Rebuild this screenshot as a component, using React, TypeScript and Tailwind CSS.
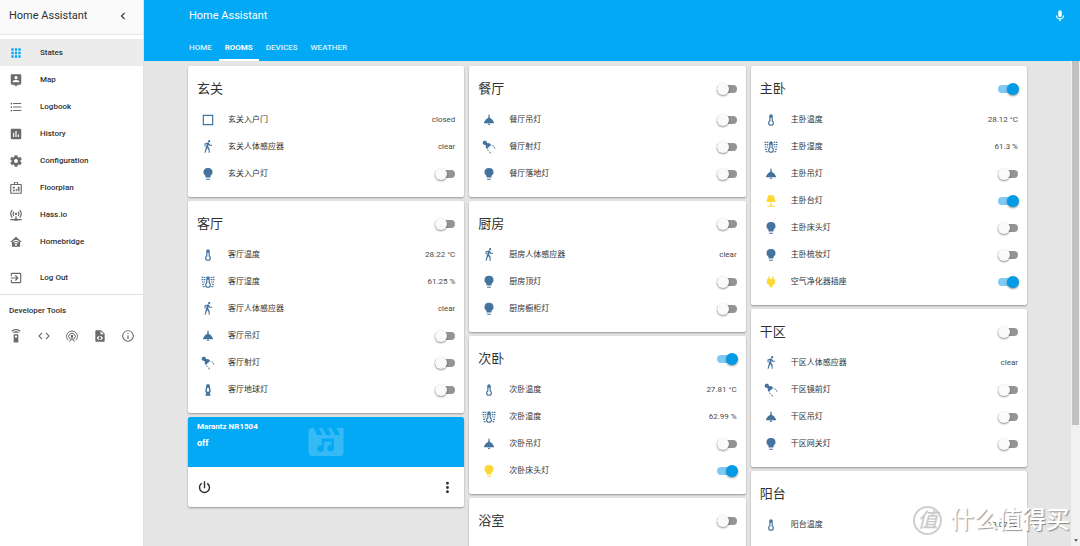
import type { ReactNode } from 'react';

const ICONS: Record<string, string> = {
  apps: 'M16,20H20V16H16M16,14H20V10H16M10,8H14V4H10M16,8H20V4H16M10,14H14V10H10M4,14H8V10H4M4,20H8V16H4M10,20H14V16H10M4,8H8V4H4V8Z',
  account:
    'M18,16H6V15.1C6,13.1 10,12 12,12C14,12 18,13.1 18,15.1M12,5.3C13.5,5.3 14.7,6.5 14.7,8C14.7,9.5 13.5,10.7 12,10.7C10.5,10.7 9.3,9.5 9.3,8C9.3,6.5 10.5,5.3 12,5.3M19,2H5C3.89,2 3,2.89 3,4V18A2,2 0 0,0 5,20H9L12,23L15,20H19A2,2 0 0,0 21,18V4C21,2.89 20.1,2 19,2Z',
  list: 'M7,5H21V7H7V5M7,13V11H21V13H7M4,4.5A1.5,1.5 0 0,1 5.5,6A1.5,1.5 0 0,1 4,7.5A1.5,1.5 0 0,1 2.5,6A1.5,1.5 0 0,1 4,4.5M4,10.5A1.5,1.5 0 0,1 5.5,12A1.5,1.5 0 0,1 4,13.5A1.5,1.5 0 0,1 2.5,12A1.5,1.5 0 0,1 4,10.5M7,19V17H21V19H7M4,16.5A1.5,1.5 0 0,1 5.5,18A1.5,1.5 0 0,1 4,19.5A1.5,1.5 0 0,1 2.5,18A1.5,1.5 0 0,1 4,16.5Z',
  poll: 'M17,17H15V13H17M13,17H11V7H13M9,17H7V10H9M19,3H5C3.89,3 3,3.89 3,5V19A2,2 0 0,0 5,21H19A2,2 0 0,0 21,19V5C21,3.89 20.1,3 19,3Z',
  cog: 'M12,15.5A3.5,3.5 0 0,1 8.5,12A3.5,3.5 0 0,1 12,8.5A3.5,3.5 0 0,1 15.5,12A3.5,3.5 0 0,1 12,15.5M19.43,12.97C19.47,12.65 19.5,12.33 19.5,12C19.5,11.67 19.47,11.34 19.43,11L21.54,9.37C21.73,9.22 21.78,8.95 21.66,8.73L19.66,5.27C19.54,5.05 19.27,4.96 19.05,5.05L16.56,6.05C16.04,5.66 15.5,5.32 14.87,5.07L14.5,2.42C14.46,2.18 14.25,2 14,2H10C9.75,2 9.54,2.18 9.5,2.42L9.13,5.07C8.5,5.32 7.96,5.66 7.44,6.05L4.95,5.05C4.73,4.96 4.46,5.05 4.34,5.27L2.34,8.73C2.21,8.95 2.27,9.22 2.46,9.37L4.57,11C4.53,11.34 4.5,11.67 4.5,12C4.5,12.33 4.53,12.65 4.57,12.97L2.46,14.63C2.27,14.78 2.21,15.05 2.34,15.27L4.34,18.73C4.46,18.95 4.73,19.03 4.95,18.95L7.44,17.94C7.96,18.34 8.5,18.68 9.13,18.93L9.5,21.58C9.54,21.82 9.75,22 10,22H14C14.25,22 14.46,21.82 14.5,21.58L14.87,18.93C15.5,18.67 16.04,18.34 16.56,17.94L19.05,18.95C19.27,19.03 19.54,18.95 19.66,18.73L21.66,15.27C21.78,15.05 21.73,14.78 21.54,14.63L19.43,12.97Z',
  floorplan:
    'M9,1.5H15L16,5H20A2,2 0 0,1 22,7V20A2,2 0 0,1 20,22H4A2,2 0 0,1 2,20V7A2,2 0 0,1 4,5H8L9,1.5M10.4,3.2L10,5H14L13.6,3.2H10.4M4,7V20H20V7H4M6.5,10H10V13H6.5V10M6.5,15H10V17.5H6.5V15M11.5,13.5H13.5V17.5H11.5V13.5M15,10H18V17.5H15V10Z',
  network:
    'M4.93,2.93C3.12,4.74 2,7.24 2,10C2,12.76 3.12,15.26 4.93,17.07L6.34,15.66C4.89,14.22 4,12.22 4,10C4,7.79 4.89,5.78 6.34,4.34L4.93,2.93M19.07,2.93L17.66,4.34C19.11,5.78 20,7.79 20,10C20,12.22 19.11,14.22 17.66,15.66L19.07,17.07C20.88,15.26 22,12.76 22,10C22,7.24 20.88,4.74 19.07,2.93M7.76,5.76C6.67,6.85 6,8.35 6,10C6,11.65 6.67,13.15 7.76,14.24L9.17,12.83C8.45,12.11 8,11.11 8,10C8,8.89 8.45,7.89 9.17,7.17L7.76,5.76M16.24,5.76L14.83,7.17C15.55,7.89 16,8.89 16,10C16,11.11 15.55,12.11 14.83,12.83L16.24,14.24C17.33,13.15 18,11.65 18,10C18,8.35 17.33,6.85 16.24,5.76M12,8A2,2 0 0,0 10,10A2,2 0 0,0 12,12A2,2 0 0,0 14,10A2,2 0 0,0 12,8M11,14V18H10A1,1 0 0,0 9,19H2V21H9A1,1 0 0,0 10,22H14A1,1 0 0,0 15,21H22V19H15A1,1 0 0,0 14,18H13V14H11Z',
  bridge:
    'M12,3L2,12H5V20H19V12H22L12,3M12,8.5C14.34,8.5 16.46,9.43 18,10.94L16.8,12.12C15.58,10.91 13.88,10.17 12,10.17C10.12,10.17 8.42,10.91 7.2,12.12L6,10.94C7.54,9.43 9.66,8.5 12,8.5M12,11.83C13.4,11.83 14.67,12.39 15.6,13.3L14.4,14.47C13.79,13.87 12.94,13.5 12,13.5C11.06,13.5 10.2,13.87 9.6,14.47L8.4,13.3C9.33,12.39 10.6,11.83 12,11.83M12,15.17C12.94,15.17 13.7,15.91 13.7,16.83C13.7,17.75 12.94,18.5 12,18.5C11.06,18.5 10.3,17.75 10.3,16.83C10.3,15.91 11.06,15.17 12,15.17Z',
  exit: 'M19,3H5C3.89,3 3,3.89 3,5V9H5V5H19V19H5V15H3V19A2,2 0 0,0 5,21H19A2,2 0 0,0 21,19V5C21,3.89 20.1,3 19,3M10.08,15.58L11.5,17L16.5,12L11.5,7L10.08,8.41L12.67,11H3V13H12.67L10.08,15.58Z',
  remote:
    'M12,0C8.96,0 6.21,1.23 4.22,3.22L5.63,4.63C7.26,3 9.5,2 12,2C14.5,2 16.74,3 18.36,4.64L19.77,3.23C17.79,1.23 15.04,0 12,0M7.05,6.05L8.46,7.46C9.37,6.56 10.62,6 12,6C13.38,6 14.63,6.56 15.54,7.46L16.95,6.05C15.68,4.78 13.93,4 12,4C10.07,4 8.32,4.78 7.05,6.05M12,15A2,2 0 0,1 10,13A2,2 0 0,1 12,11A2,2 0 0,1 14,13A2,2 0 0,1 12,15M15,9H9A1,1 0 0,0 8,10V22A1,1 0 0,0 9,23H15A1,1 0 0,0 16,22V10A1,1 0 0,0 15,9Z',
  code: 'M14.6,16.6L19.2,12L14.6,7.4L16,6L22,12L16,18L14.6,16.6M9.4,16.6L4.8,12L9.4,7.4L8,6L2,12L8,18L9.4,16.6Z',
  file: 'M13,9H18.5L13,3.5V9M6,2H14L20,8V20A2,2 0 0,1 18,22H6C4.89,22 4,21.1 4,20V4C4,2.89 4.89,2 6,2M6.12,15.5L9.86,19.24L11.28,17.83L8.95,15.5L11.28,13.17L9.86,11.76L6.12,15.5M17.28,15.5L13.54,11.76L12.12,13.17L14.45,15.5L12.12,17.83L13.54,19.24L17.28,15.5Z',
  info: 'M11,9H13V7H11M12,20C7.59,20 4,16.41 4,12C4,7.59 7.59,4 12,4C16.41,4 20,7.59 20,12C20,16.41 16.41,20 12,20M12,2A10,10 0 0,0 2,12A10,10 0 0,0 12,22A10,10 0 0,0 22,12A10,10 0 0,0 12,2M11,17H13V11H11V17Z',
  chevron: 'M15.41,16.58L10.83,12L15.41,7.41L14,6L8,12L14,18L15.41,16.58Z',
  mic: 'M12,2A3,3 0 0,1 15,5V11A3,3 0 0,1 12,14A3,3 0 0,1 9,11V5A3,3 0 0,1 12,2M19,11C19,14.53 16.39,17.44 13,17.93V21H11V17.93C7.61,17.44 5,14.53 5,11H7A5,5 0 0,0 12,16A5,5 0 0,0 17,11H19Z',
  square: 'M3,3H21V21H3V3M5,5V19H19V5H5Z',
  walk: 'M14.12,10H19V8.2H15.38L13.38,4.87C13.08,4.37 12.54,4.03 11.92,4.03C11.74,4.03 11.58,4.06 11.42,4.11L6,5.8V11H7.8V7.33L9.91,6.67L6,22H7.8L10.67,13.89L13,17V22H14.8V15.59L12.31,11.05L13.04,8.18M14,3.8C15,3.8 15.8,3 15.8,2C15.8,1 15,0.2 14,0.2C13,0.2 12.2,1 12.2,2C12.2,3 13,3.8 14,3.8Z',
  bulb: 'M12,1.5A7.8,7.8 0 0,0 4.2,9C4.2,11.6 5.7,13.7 7.7,15V17A1,1 0 0,0 8.7,18H15.3A1,1 0 0,0 16.3,17V15C18.3,13.7 19.8,11.6 19.8,9A7.8,7.8 0 0,0 12,1.5M8.7,21A1,1 0 0,0 9.7,22H14.3A1,1 0 0,0 15.3,21V20H8.7V21Z',
  temp: 'M17,17A5,5 0 0,1 12,22A5,5 0 0,1 7,17C7,15.36 7.79,13.91 9,13V5A3,3 0 0,1 12,2A3,3 0 0,1 15,5V13C16.21,13.91 17,15.36 17,17M11,8V14.17C9.83,14.58 9,15.69 9,17A3,3 0 0,0 12,20A3,3 0 0,0 15,17C15,15.69 14.17,14.58 13,14.17V8H11Z',
  humidity:
    'M17,17A5,5 0 0,1 12,22A5,5 0 0,1 7,17C7,15.36 7.79,13.91 9,13V5A3,3 0 0,1 12,2A3,3 0 0,1 15,5V13C16.21,13.91 17,15.36 17,17M11,8V14.17C9.83,14.58 9,15.69 9,17A3,3 0 0,0 12,20A3,3 0 0,0 15,17C15,15.69 14.17,14.58 13,14.17V8H11ZM1,3H3.5V5H1ZM4.5,3H7.5V5H4.5ZM1,7H3.5V9H1ZM4.5,7H7.5V9H4.5ZM1.5,11H4V13H1.5ZM5,11H7V13H5ZM2,15H5V17H2ZM3,19H6V21H3ZM16.5,3H19.5V5H16.5ZM20.5,3H23V5H20.5ZM16.5,7H19.5V9H16.5ZM20.5,7H23V9H20.5ZM17,11H19V13H17ZM20,11H22.5V13H20ZM19,15H22V17H19ZM18,19H21V21H18Z',
  pendant: 'M11.2,2.5H12.8L13.3,8L17.5,11L20.5,16V17.5H3.5V16L6.5,11L10.7,8L11.2,2.5M9.8,18.3H14.2A2.2,2.2 0 0,1 9.8,18.3Z',
  spot: 'M2,2L5,1L8,2.5L8.5,5L13,5.5L16.5,9L13.5,10L12.5,12L10,13L9,16.5L6.5,12.5L6.2,8.5L3,8L1,5.5ZM17.5,9.5L19,9L20.5,11L19,11.5ZM20.3,12.2L21.8,12L23,14.5L21.5,15ZM8.8,17L10.5,16.5L11.8,18.5L10.2,19ZM12,20L13.5,19.5L15.5,22.5L14,23Z',
  lava: 'M9.5,2H14.5L16.8,14L15,18L17,22H7L9,18L7.2,14L9.5,2M12,7C11,9 9.8,11 9.8,13A2.2,2.2 0 0,0 14.2,13C14.2,11 13,9 12,7Z',
  lamp: 'M7.5,2H16.5L20,13.5H4L7.5,2M11,14.5H13V20H18.5V22H5.5V20H11V14.5Z',
  plug: 'M16.5,7V3H14V7H10V3H7.5V7C6,7 5,8 5,9V14.5L9.5,18V21H14.5V18L19,14.5V9C19,8 18,7 16.5,7Z',
  power:
    'M16.56,5.44L15.11,6.89C16.84,7.94 18,9.83 18,12A6,6 0 0,1 12,18A6,6 0 0,1 6,12C6,9.83 7.16,7.94 8.88,6.88L7.44,5.44C5.36,6.88 4,9.28 4,12A8,8 0 0,0 12,20A8,8 0 0,0 20,12C20,9.28 18.64,6.88 16.56,5.44M13,3H11V13H13',
  dots: 'M12,16A2,2 0 0,1 14,18A2,2 0 0,1 12,20A2,2 0 0,1 10,18A2,2 0 0,1 12,16M12,10A2,2 0 0,1 14,12A2,2 0 0,1 12,14A2,2 0 0,1 10,12A2,2 0 0,1 12,10M12,4A2,2 0 0,1 14,6A2,2 0 0,1 12,8A2,2 0 0,1 10,6A2,2 0 0,1 12,4Z',
};

function Icon({ name, className = '' }: { name: string; className?: string }) {
  return (
    <svg viewBox="0 0 24 24" aria-hidden="true" className={`shrink-0 fill-current ${className || 'size-3.5'}`}>
      {name === 'tower' ? (
        <g fill="none" stroke="currentColor" strokeWidth="1.7">
          <path d="M5.6,19.5A9.3,9.3 0 1 1 18.4,19.5" />
          <path d="M7.8,16.6A5.6,5.6 0 1 1 16.2,16.6" />
          <path d="M12,12L8.2,22M12,12L15.8,22M10,18H14" strokeWidth="1.5" />
          <circle cx="12" cy="12" r="1.4" fill="currentColor" />
        </g>
      ) : (
        <path fillRule="evenodd" d={ICONS[name]} />
      )}
    </svg>
  );
}

function Toggle({ id, on, label }: { id: string; on: boolean; label?: string }) {
  return (
    <input
      id={id}
      type="checkbox"
      role="switch"
      aria-label={label}
      defaultChecked={on}
      className="relative h-2 w-5 shrink-0 cursor-pointer appearance-none rounded-full bg-[#949494] before:absolute before:-top-0.5 before:left-0 before:size-3 before:rounded-full before:bg-[#fafafa] before:shadow-[0_1px_2px_rgba(0,0,0,0.45)] checked:bg-[#7fcbf3] checked:before:left-[9px] checked:before:bg-[#039be5]"
    />
  );
}

type Row = { icon: string; name: string; value: string | boolean };
type Room = { name: string; toggle?: boolean; rows: Row[] };

const row = (icon: string, name: string, value: string | boolean): Row => ({ icon, name, value });

const HALL: Room = {
  name: '玄关',
  rows: [row('square', '玄关入户门', 'closed'), row('walk', '玄关人体感应器', 'clear'), row('bulb', '玄关入户灯', false)],
};

const LIVING: Room = {
  name: '客厅',
  toggle: false,
  rows: [
    row('temp', '客厅温度', '28.22 °C'),
    row('humidity', '客厅湿度', '61.25 %'),
    row('walk', '客厅人体感应器', 'clear'),
    row('pendant', '客厅吊灯', false),
    row('spot', '客厅射灯', false),
    row('lava', '客厅地球灯', false),
  ],
};

const MIDDLE: Room[] = [
  {
    name: '餐厅',
    toggle: false,
    rows: [row('pendant', '餐厅吊灯', false), row('spot', '餐厅射灯', false), row('bulb', '餐厅落地灯', false)],
  },
  {
    name: '厨房',
    toggle: false,
    rows: [row('walk', '厨房人体感应器', 'clear'), row('bulb', '厨房顶灯', false), row('bulb', '厨房橱柜灯', false)],
  },
  {
    name: '次卧',
    toggle: true,
    rows: [
      row('temp', '次卧温度', '27.81 °C'),
      row('humidity', '次卧湿度', '62.99 %'),
      row('pendant', '次卧吊灯', false),
      row('bulb', '次卧床头灯', true),
    ],
  },
  { name: '浴室', toggle: false, rows: [] },
];

const RIGHT: Room[] = [
  {
    name: '主卧',
    toggle: true,
    rows: [
      row('temp', '主卧温度', '28.12 °C'),
      row('humidity', '主卧湿度', '61.3 %'),
      row('pendant', '主卧吊灯', false),
      row('lamp', '主卧台灯', true),
      row('bulb', '主卧床头灯', false),
      row('bulb', '主卧梳妆灯', false),
      row('plug', '空气净化器插座', true),
    ],
  },
  {
    name: '干区',
    toggle: false,
    rows: [
      row('walk', '干区人体感应器', 'clear'),
      row('spot', '干区镜前灯', false),
      row('pendant', '干区吊灯', false),
      row('bulb', '干区网关灯', false),
    ],
  },
  { name: '阳台', rows: [row('temp', '阳台温度', '23.07 °C')] },
];

function Card({ children }: { children: ReactNode }) {
  return (
    <section className="overflow-hidden rounded-xs bg-white shadow-[0_1px_2px_rgba(0,0,0,0.35)]">{children}</section>
  );
}

function RoomCard({ room }: { room: Room }) {
  return (
    <Card>
      <div className="pb-2.5">
        <header className="flex h-10 items-center justify-between pt-[5px] pr-[9px] pl-[9px]">
          <h2 className="text-[13px] leading-5 text-[#303030]">{room.name}</h2>
          {room.toggle !== undefined && <Toggle id={room.name} on={room.toggle} label={room.name} />}
        </header>
        <ul>
          {room.rows.map((r) => (
            <li key={r.name} className="flex h-[27px] items-center pr-[9px] pl-[13px]">
              <span className={r.value === true ? 'text-[#fdd835]' : 'text-[#44739e]'}>
                <Icon name={r.icon} />
              </span>
              <label htmlFor={r.name} className="ml-[13px] flex-1 text-[8px] text-[#303030]">
                {r.name}
              </label>
              {typeof r.value === 'string' ? (
                <output id={r.name} className="text-[8px] text-[#4a4a4a]">
                  {r.value}
                </output>
              ) : (
                <Toggle id={r.name} on={r.value} />
              )}
            </li>
          ))}
        </ul>
      </div>
    </Card>
  );
}

function MediaCard() {
  return (
    <Card>
      <div className="grid h-[50px] grid-cols-3 bg-[#03a9f4] text-white">
        <div className="pt-1 pl-[9px]">
          <h2 className="text-[8px] leading-3 font-bold">Marantz NR1504</h2>
          <p className="mt-1 text-[9px] leading-3 font-bold">off</p>
        </div>
        <svg viewBox="0 0 24 24" aria-hidden="true" className="size-[42px] place-self-center">
          <path
            fill="#35baf6"
            d="M18,4L20,8H17L15,4H13L15,8H12L10,4H8L10,8H7L5,4H4A2,2 0 0,0 2,6V18A2,2 0 0,0 4,20H20A2,2 0 0,0 22,18V4H18Z"
          />
          <path
            fill="#03a9f4"
            d="M9.5,10H16.5V15.5A1.9,1.9 0 1 1 15.2,13.7V11.8H10.8V15.8A1.9,1.9 0 1 1 9.5,14Z"
          />
        </svg>
      </div>
      <div className="flex h-10 items-center justify-between px-2 text-[#303030]">
        <button type="button" aria-label="Power">
          <Icon name="power" className="size-[17px]" />
        </button>
        <button type="button" aria-label="More">
          <Icon name="dots" className="size-[17px]" />
        </button>
      </div>
    </Card>
  );
}

const MENU = [
  ['apps', 'States'],
  ['account', 'Map'],
  ['list', 'Logbook'],
  ['poll', 'History'],
  ['cog', 'Configuration'],
  ['floorplan', 'Floorplan'],
  ['network', 'Hass.io'],
  ['bridge', 'Homebridge'],
];

const TOOLS = [
  ['remote', 'Services'],
  ['code', 'States'],
  ['tower', 'Events'],
  ['file', 'Templates'],
  ['info', 'Info'],
];

function MenuLink({ icon, label, active = false }: { icon: string; label: string; active?: boolean }) {
  return (
    <a href="#" className={`flex h-[27px] items-center gap-[17px] pl-[9px] ${active ? 'bg-[#ececec]' : ''}`}>
      <span className={active ? 'text-[#03a9f4]' : 'text-[#6a6a6a]'}>
        <Icon name={icon} />
      </span>
      <span className="text-[8px] font-medium">{label}</span>
    </a>
  );
}

function Sidebar() {
  return (
    <aside className="w-36 shrink-0 border-r border-[#e0e0e0] bg-white text-[#303030]">
      <div className="flex h-[35px] items-center justify-between border-b border-[#e6e6e6] bg-[#fafafa] pr-[13px] pb-0.5 pl-[9px]">
        <h1 className="text-[11px]">Home Assistant</h1>
        <button type="button" aria-label="Collapse sidebar">
          <Icon name="chevron" />
        </button>
      </div>
      <nav className="pt-1">
        {MENU.map(([icon, label], i) => (
          <MenuLink key={label} icon={icon} label={label} active={i === 0} />
        ))}
        <div className="border-b border-[#e0e0e0] pt-[9px] pb-[3px]">
          <MenuLink icon="exit" label="Log Out" />
        </div>
      </nav>
      <h2 className="px-[9px] pt-2.5 text-[8px] leading-3 font-medium">Developer Tools</h2>
      <div className="flex justify-between pt-3 pr-2 pl-[9px] text-[#6a6a6a]">
        {TOOLS.map(([icon, label]) => (
          <a key={icon} href="#" aria-label={label}>
            <Icon name={icon} />
          </a>
        ))}
      </div>
    </aside>
  );
}

function Header() {
  return (
    <header className="flex h-[61px] shrink-0 flex-col justify-between bg-[#03a9f4] text-white">
      <div className="flex h-8 items-center justify-between pr-[13px] pl-[45px]">
        <p className="text-[11px]">Home Assistant</p>
        <button type="button" aria-label="Voice input">
          <Icon name="mic" />
        </button>
      </div>
      <nav className="flex gap-px pl-[39px] text-[8px] font-medium">
        {['HOME', 'ROOMS', 'DEVICES', 'WEATHER'].map((tab) => (
          <a
            key={tab}
            href="#"
            className={`flex h-[27px] items-center border-b-2 px-1.5 pt-0.5 ${tab === 'ROOMS' ? 'border-white font-bold' : 'border-transparent text-white/85'}`}
          >
            {tab}
          </a>
        ))}
      </nav>
    </header>
  );
}

function Watermark() {
  return (
    <div className="pointer-events-none absolute right-2.5 bottom-2 flex items-center gap-2 text-white [text-shadow:1px_1px_1px_rgba(0,0,0,0.4)]">
      <span className="flex size-[29px] items-center justify-center rounded-full border-2 border-[#cfcfcf] text-[20px] leading-none font-medium text-[#cacaca] italic [text-shadow:none]">
        值
      </span>
      <span className="text-[24px] leading-9 font-medium">什么值得买</span>
    </div>
  );
}

export default function App() {
  return (
    <div className="relative flex h-screen overflow-hidden bg-[#e5e5e5] font-['Roboto','Noto_Sans_CJK_SC',sans-serif]">
      <Sidebar />
      <div className="flex min-w-0 flex-1 flex-col">
        <Header />
        <div className="flex min-h-0 flex-1">
          <main className="flex min-w-0 flex-1 items-start gap-[5px] overflow-hidden px-11 pt-[5px]">
            <div className="flex flex-1 flex-col gap-1">
              <RoomCard room={HALL} />
              <RoomCard room={LIVING} />
              <MediaCard />
            </div>
            <div className="flex flex-1 flex-col gap-1">
              {MIDDLE.map((room) => (
                <RoomCard key={room.name} room={room} />
              ))}
            </div>
            <div className="flex flex-1 flex-col gap-1">
              {RIGHT.map((room) => (
                <RoomCard key={room.name} room={room} />
              ))}
            </div>
          </main>
          <div aria-hidden="true" className="flex w-[9px] flex-col items-center justify-between bg-[#f1f1f1]">
            <div className="h-3/4 w-[7px] bg-[#c1c1c1]" />
            <svg viewBox="0 0 6 4" className="mb-1 h-[3px] w-1 fill-[#505050]">
              <path d="M0,0H6L3,4Z" />
            </svg>
          </div>
        </div>
      </div>
      <Watermark />
    </div>
  );
}
